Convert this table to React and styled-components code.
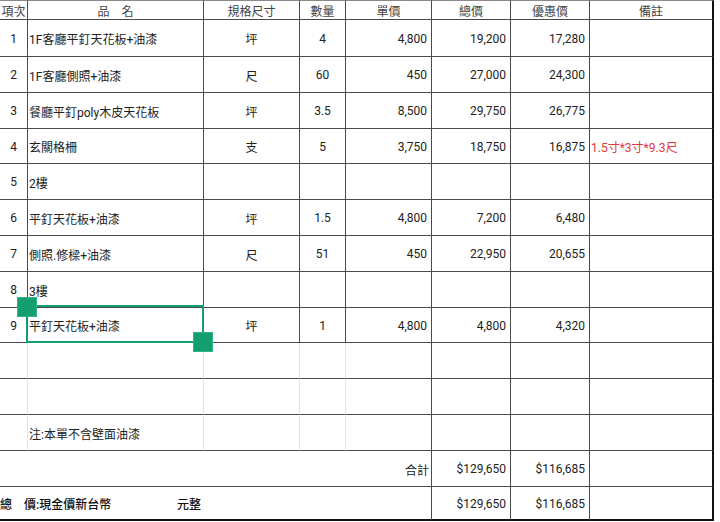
import React from "react";
import styled, { createGlobalStyle } from "styled-components";

const GlobalStyle = createGlobalStyle`
  html, body {
    margin: 0;
    padding: 0;
    background: #ffffff;
  }
  body {
    font-family: Roboto, "Noto Sans CJK TC", sans-serif;
    font-size: 12px;
    color: #222;
  }
  * { box-sizing: border-box; }
`;

const GREEN = "#139e6f";
const DARK = "#4a4a4a";
const LIGHT = "#e2e2e2";

const Sheet = styled.div`
  position: relative;
  display: grid;
  width: 714px;
  grid-template-columns: 28px 176px 96px 46px 86px 79px 79px 124px;
  grid-template-rows: 20px 37px 36px 36px 35px 36px 36px 36px 36px 35px 36px 36px 36px 36px 34px;
`;

const Cell = styled.div`
  display: flex;
  align-items: center;
  justify-content: ${({ $align }) =>
    $align === "right" ? "flex-end" : $align === "left" ? "flex-start" : "center"};
  padding: ${({ $align }) => ($align === "right" ? "0 4px 0 0" : $align === "left" ? "0 0 0 1px" : "0")};
  grid-column: span ${({ $span }) => $span || 1};
  border-right: ${({ $edge, $line }) =>
    $edge
      ? "2px solid #111"
      : $line === "none"
      ? "none"
      : `1px solid ${$line === "light" ? LIGHT : DARK}`};
  border-bottom: ${({ $foot }) => ($foot ? "2px solid #111" : `1px solid ${DARK}`)};
  white-space: nowrap;
  color: ${({ $red }) => ($red ? "#e0383a" : "#222")};
  padding-top: 1px;
`;

const Head = styled(Cell)`
  border-top: 1px solid #8a8a8a;
  color: #444;
  padding-top: 0;
`;

const Total = styled(Cell)`
  padding-right: 2px;
`;

const Grand = styled(Cell)`
  padding-left: 0;
  font-weight: 500;
  color: #111;
`;

const GrandLabel = styled.span`
  width: 177px;
`;

const Selection = styled.div`
  position: absolute;
  left: 26px;
  top: 305px;
  width: 178px;
  height: 38px;
  border: 2px solid ${GREEN};
  pointer-events: none;
`;

const Handle = styled.div`
  position: absolute;
  width: 20px;
  height: 20px;
  background: ${GREEN};
  border: 1px solid #2fb487;
  left: ${({ $x }) => $x}px;
  top: ${({ $y }) => $y}px;
`;

const headers = ["項次", "品　名", "規格尺寸", "數量", "單價", "總價", "優惠價", "備註"];

const items = [
  ["1", "1F客廳平釘天花板+油漆", "坪", "4", "4,800", "19,200", "17,280", ""],
  ["2", "1F客廳側照+油漆", "尺", "60", "450", "27,000", "24,300", ""],
  ["3", "餐廳平釘poly木皮天花板", "坪", "3.5", "8,500", "29,750", "26,775", ""],
  ["4", "玄關格柵", "支", "5", "3,750", "18,750", "16,875", "1.5寸*3寸*9.3尺"],
  ["5", "2樓", "", "", "", "", "", ""],
  ["6", "平釘天花板+油漆", "坪", "1.5", "4,800", "7,200", "6,480", ""],
  ["7", "側照.修樑+油漆", "尺", "51", "450", "22,950", "20,655", ""],
  ["8", "3樓", "", "", "", "", "", ""],
  ["9", "平釘天花板+油漆", "坪", "1", "4,800", "4,800", "4,320", ""],
];

const blanks = [
  ["", "", "", "", "", "", "", ""],
  ["", "", "", "", "", "", "", ""],
  ["", "注:本單不含壁面油漆", "", "", "", "", "", ""],
];

const aligns = ["center", "left", "center", "center", "right", "right", "right", "left"];

const App = () => {
  return (
    <>
      <GlobalStyle />
      <Sheet>
        {headers.map((h, i) => (
          <Head key={h} $edge={i === 7}>
            {h}
          </Head>
        ))}

        {items.map((row) =>
          row.map((v, i) => (
            <Cell key={row[0] + "-" + i} $align={aligns[i]} $edge={i === 7} $red={i === 7}>
              {v}
            </Cell>
          ))
        )}

        {blanks.map((row, r) =>
          row.map((v, i) => (
            <Cell
              key={"b" + r + "-" + i}
              $align={aligns[i]}
              $edge={i === 7}
              $line={i < 4 ? "light" : "dark"}
            >
              {v}
            </Cell>
          ))
        )}

        <Total $span={5} $align="right">合計</Total>
        <Cell $align="right">$129,650</Cell>
        <Cell $align="right">$116,685</Cell>
        <Cell $edge />

        <Grand $span={5} $align="left" $foot>
          <GrandLabel>總　價:現金價新台幣</GrandLabel>
          <span>元整</span>
        </Grand>
        <Cell $align="right" $foot>$129,650</Cell>
        <Cell $align="right" $foot>$116,685</Cell>
        <Cell $edge $foot />

        <Selection />
        <Handle $x={17} $y={297} />
        <Handle $x={193} $y={332} />
      </Sheet>
    </>
  );
};

export default App;
